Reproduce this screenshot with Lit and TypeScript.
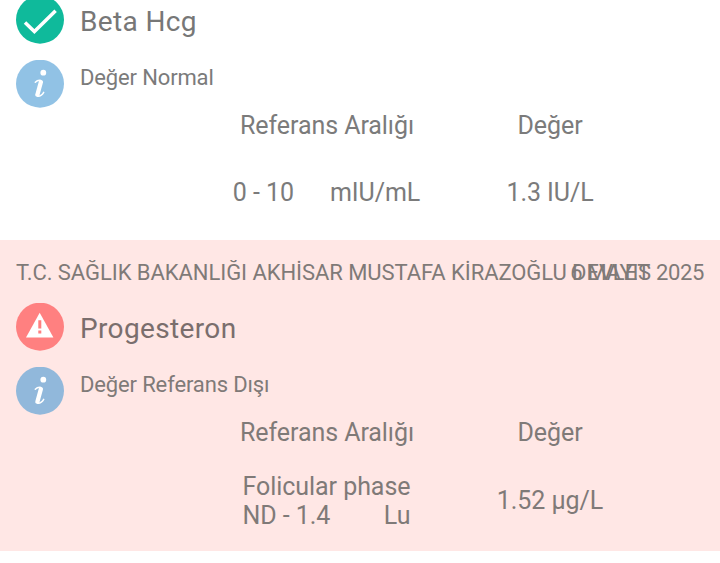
import { LitElement, html, css, svg, nothing } from "lit";
import { customElement, property } from "lit/decorators.js";

type IconKind = "check" | "warning" | "info";

interface RangeLine {
  text: string;
  unit?: string;
}

interface LabResult {
  hospital?: string;
  date?: string;
  name: string;
  status: string;
  abnormal: boolean;
  range: RangeLine[];
  value: string;
}

const RESULTS: LabResult[] = [
  {
    name: "Beta Hcg",
    status: "Değer Normal",
    abnormal: false,
    range: [{ text: "0 - 10", unit: "mIU/mL" }],
    value: "1.3 IU/L",
  },
  {
    hospital: "T.C. SAĞLIK BAKANLIĞI AKHİSAR MUSTAFA KİRAZOĞLU DEVLET",
    date: "6 MAYIS 2025",
    name: "Progesteron",
    status: "Değer Referans Dışı",
    abnormal: true,
    range: [{ text: "Folicular phase" }, { text: "ND - 1.4", unit: "Lu" }],
    value: "1.52 µg/L",
  },
];

@customElement("status-icon")
export class StatusIcon extends LitElement {
  @property() kind: IconKind = "info";

  static styles = css`
    :host { display: block; flex: none; width: 48px; height: 48px; }
    svg { display: block; }
    .check { fill: #0fba9b; }
    .warning { fill: #ff8080; }
    .info { fill: #4799d3; fill-opacity: 0.6; }
    .line { fill: none; stroke: #fff; }
    .white { fill: #fff; }
  `;

  private glyph() {
    if (this.kind === "check") {
      return svg`<path class="line" stroke-width="3.5" d="M9 26.5 18.4 35.6 39.6 14.8"/>`;
    }
    if (this.kind === "warning") {
      return svg`<path class="white" d="M23.7 9.7 37.4 34.4H10Z"/>
        <path class="warning" d="M22.3 17.2h3v8.2h-3zM22.3 27.5h3v2.9h-3z"/>`;
    }
    return svg`<circle class="white" cx="27.3" cy="12.7" r="2.9"/>
      <path class="line" stroke-width="1.5" stroke-linecap="round" d="M19.3 22.3Q21.6 19.9 24.5 20.4M22 36.2Q25.8 36 27.7 32.3"/>
      <path class="line" stroke-width="4.3" stroke-linecap="round" stroke-linejoin="round" d="M24.9 22 21.4 34.7"/>`;
  }

  render() {
    return html`<svg width="48" height="48" viewBox="0 0 48 48" aria-hidden="true">
      <circle class=${this.kind} cx="24" cy="23.7" r="24"></circle>
      ${this.glyph()}
    </svg>`;
  }
}

@customElement("lab-result")
export class LabResultCard extends LitElement {
  @property({ attribute: false }) result!: LabResult;

  static styles = css`
    :host { display: block; }
    .card { box-sizing: border-box; padding: 0 16px; color: #7b7b7b; display: flow-root; }
    .normal { height: 240px; }
    .abnormal { height: 311px; background: #ffe7e5; color: #7f7a78; }
    .head {
      display: grid;
      height: 59px;
      padding-top: 20px;
      box-sizing: border-box;
      font-size: 22px;
      line-height: 26px;
      white-space: nowrap;
      letter-spacing: -0.06px;
    }
    .head > * { grid-area: 1 / 1; }
    .date { justify-self: end; letter-spacing: -0.34px; }
    .row { display: flex; gap: 16px; height: 48px; }
    .title { align-items: center; margin-top: 4px; }
    .normal .title { margin-top: -4px; }
    .name { font-size: 28px; line-height: 34px; color: #777; letter-spacing: 0.36px; margin-top: 3px; }
    .abnormal .name { color: #7a6e6d; }
    .note { margin-top: 16px; }
    .status { font-size: 22px; line-height: 26px; margin-top: 5px; letter-spacing: -0.14px; }
    .table {
      display: grid;
      grid-template-columns: 223px 223px;
      grid-template-rows: 30px auto;
      justify-items: center;
      margin: 3px 0 0 199px;
      font-size: 25px;
      line-height: 29px;
      letter-spacing: -0.06px;
      white-space: nowrap;
    }
    .column, .value { padding-left: 1px; }
    .range, .value { margin-top: 37px; }
    .abnormal .range { margin-top: 24px; }
    .abnormal .value { margin-top: 38px; }
    .line { display: flex; gap: 36px; }
    .abnormal .line { justify-content: space-between; }
  `;

  render() {
    const r = this.result;
    return html`<section class="card ${r.abnormal ? "abnormal" : "normal"}">
      ${r.hospital
        ? html`<header class="head"><span>${r.hospital}</span><span class="date">${r.date}</span></header>`
        : nothing}
      <div class="row title">
        <status-icon .kind=${r.abnormal ? "warning" : "check"}></status-icon>
        <span class="name">${r.name}</span>
      </div>
      <div class="row note">
        <status-icon .kind=${"info"}></status-icon>
        <span class="status">${r.status}</span>
      </div>
      <div class="table">
        <span class="column">Referans Aralığı</span>
        <span class="column">Değer</span>
        <div class="range">
          ${r.range.map(
            (l) => html`<div class="line"><span>${l.text}</span>${l.unit ? html`<span>${l.unit}</span>` : nothing}</div>`
          )}
        </div>
        <span class="value">${r.value}</span>
      </div>
    </section>`;
  }
}

@customElement("app-root")
export class AppRoot extends LitElement {
  static styles = css`
    :host {
      display: block;
      height: 563px;
      overflow: hidden;
      background: #fff;
      font-family: Roboto, "Liberation Sans", sans-serif;
    }
  `;

  render() {
    return RESULTS.map((r) => html`<lab-result .result=${r}></lab-result>`);
  }
}
